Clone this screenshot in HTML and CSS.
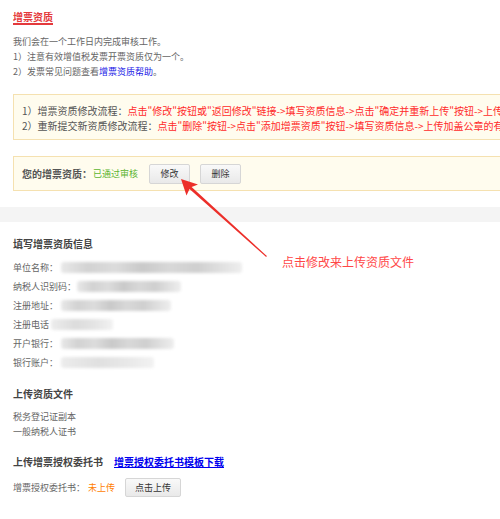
FILE: index.html
```html
<!DOCTYPE html>
<html lang="zh-CN">
<head>
<meta charset="utf-8">
<title>增票资质</title>
<link rel="stylesheet" href="styles.css">
</head>
<body>
<div class="page">
  <section class="intro">
    <h2 class="tab-title">增票资质</h2>
    <div class="intro-text">
      <p>我们会在一个工作日内完成审核工作。</p>
      <p>1）注意有效增值税发票开票资质仅为一个。</p>
      <p>2）发票常见问题查看<a class="help">增票资质帮助</a>。</p>
    </div>
  </section>

  <div class="notice">
    <p>1）增票资质修改流程：<span class="red">点击"修改"按钮或"返回修改"链接-&gt;填写资质信息-&gt;点击"确定并重新上传"按钮-&gt;上传加盖公章的有效证件</span></p>
    <p>2）重新提交新资质修改流程：<span class="red">点击"删除"按钮-&gt;点击"添加增票资质"按钮-&gt;填写资质信息-&gt;上传加盖公章的有效证件</span></p>
  </div>

  <div class="status">
    <span class="status-label">您的增票资质：</span>
    <span class="ok">已通过审核</span>
    <button class="btn btn-edit">修改</button>
    <button class="btn btn-del">删除</button>
  </div>

  <div class="band"></div>

  <section class="block info">
    <h3>填写增票资质信息</h3>
    <div class="fields">
      <div class="row"><span>单位名称：</span><span class="blur w1"></span></div>
      <div class="row"><span>纳税人识别码：</span><span class="blur w2"></span></div>
      <div class="row"><span>注册地址：</span><span class="blur w3"></span></div>
      <div class="row"><span>注册电话</span><span class="blur w4"></span></div>
      <div class="row"><span>开户银行：</span><span class="blur w5"></span></div>
      <div class="row"><span>银行账户：</span><span class="blur w6"></span></div>
    </div>
  </section>

  <section class="block files">
    <h3>上传资质文件</h3>
    <ul class="file-list">
      <li>税务登记证副本</li>
      <li>一般纳税人证书</li>
    </ul>
  </section>

  <section class="block auth">
    <h3>上传增票授权委托书<a class="tpl-link">增票授权委托书模板下载</a></h3>
    <div class="upload-row">
      <span>增票授权委托书：</span>
      <span class="pending">未上传</span>
      <button class="btn btn-upload">点击上传</button>
    </div>
  </section>

  <svg class="arrow" width="500" height="519" viewBox="0 0 500 519" aria-hidden="true">
    <polygon points="181,179 198,184.5 191.6,186.9 266.9,256.1 266.1,256.9 189.5,189 186.5,195.5" fill="#ec2f2a"/>
  </svg>
  <div class="annotation">点击修改来上传资质文件</div>
</div>
</body>
</html>
```

FILE: styles.css
```css
* {
  box-sizing: border-box;
  margin: 0;
  padding: 0;
}

html,
body {
  width: 500px;
  height: 519px;
  overflow: hidden;
  background: #fff;
}

body {
  font-family: "Noto Sans CJK SC", "Liberation Sans", sans-serif;
  font-size: 9px;
  color: #666;
}

.page {
  position: relative;
  width: 500px;
  height: 519px;
}

.intro {
  padding: 10px 0 0 13px;
}

.tab-title {
  display: inline-block;
  font-size: 10px;
  font-weight: bold;
  line-height: 13px;
  color: #e4393c;
  border-bottom: 2px solid #e4393c;
}

.intro-text {
  margin-top: 9px;
  line-height: 15px;
}

.help {
  color: #1717e6;
}

.notice {
  margin: 15px 0 0 13px;
  width: 620px;
  padding: 8px 8px 6px;
  background: #fffcee;
  border: 1px solid #f5e1b0;
  line-height: 15px;
  white-space: nowrap;
  font-size: 10px;
  color: #555;
}

.red {
  color: #ff2a2a;
}

.status {
  margin: 16px 0 0 13px;
  width: 620px;
  height: 35px;
  display: flex;
  align-items: center;
  padding-left: 8px;
  background: #fffcee;
  border: 1px solid #f5e1b0;
}

.status-label {
  font-size: 10px;
  font-weight: bold;
  color: #555;
}

.ok {
  margin-left: 1px;
  color: #5cb531;
}

.btn {
  font-family: inherit;
  font-size: 9px;
  color: #333;
  height: 20px;
  background: linear-gradient(#f9f9f9, #e9e9e9);
  border: 1px solid #d6d6d6;
  border-radius: 2px;
}

.btn-edit {
  width: 41px;
  margin-left: 11px;
}

.btn-del {
  width: 41px;
  margin-left: 10px;
}

.band {
  margin-top: 16px;
  height: 15px;
  background: #f4f4f4;
}

.block {
  padding-left: 13px;
}

.block h3 {
  font-size: 10px;
  font-weight: bold;
  line-height: 14px;
  color: #444;
}

.info {
  margin-top: 15px;
}

.fields {
  margin-top: 7px;
}

.row {
  display: flex;
  align-items: center;
  height: 19px;
}

.blur {
  display: inline-block;
  height: 11px;
  border-radius: 3px;
  filter: blur(1.5px);
  background: linear-gradient(90deg, #e8e8e8 0%, #d2d2d2 15%, #dcdcdc 30%, #c9c9c9 45%, #d8d8d8 60%, #cfcfcf 75%, #e2e2e2 90%, #eeeeee 100%);
}

.w1 { width: 181px; margin-left: 3px; }
.w2 { width: 104px; margin-left: 1px; }
.w3 { width: 110px; margin-left: 3px; }
.w4 { width: 62px; margin-left: 2px; background: linear-gradient(90deg, #ececec, #dcdcdc 40%, #e4e4e4 70%, #f2f2f2); }
.w5 { width: 113px; margin-left: 3px; }
.w6 { width: 93px; margin-left: 3px; background: linear-gradient(90deg, #ececec, #e0e0e0 40%, #e8e8e8 70%, #f2f2f2); }

.files {
  margin-top: 15px;
}

.file-list {
  list-style: none;
  margin-top: 8px;
  line-height: 15px;
}

.auth {
  margin-top: 16px;
}

.tpl-link {
  margin-left: 11px;
  color: #0000ee;
  text-decoration: underline;
}

.upload-row {
  margin-top: 8px;
  height: 20px;
  display: flex;
  align-items: center;
}

.pending {
  margin-left: 3px;
  color: #ff7e00;
}

.btn-upload {
  width: 56px;
  height: 19px;
  margin-left: 10px;
}

.arrow {
  position: absolute;
  left: 0;
  top: 0;
  pointer-events: none;
}

.annotation {
  position: absolute;
  left: 282px;
  top: 254px;
  font-size: 12px;
  line-height: 16px;
  color: #ff4747;
  white-space: nowrap;
}
```
